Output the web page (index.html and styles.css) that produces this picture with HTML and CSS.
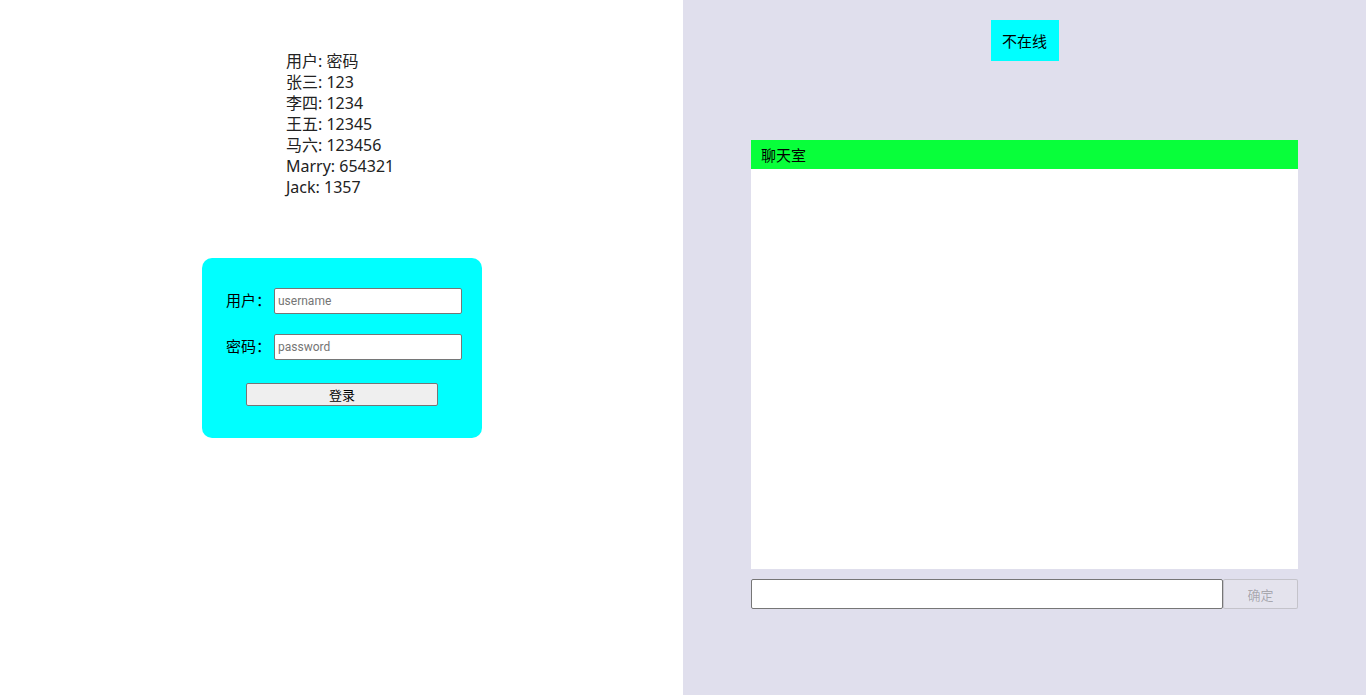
FILE: index.html
```html
<!DOCTYPE html>
<html>
<head>
<meta charset="utf-8">
<link rel="stylesheet" href="styles.css">
</head>
<body>
<div class="page">
  <div class="left">
    <div class="users">
      <div>用户: 密码</div>
      <div>张三: 123</div>
      <div>李四: 1234</div>
      <div>王五: 12345</div>
      <div>马六: 123456</div>
      <div>Marry: 654321</div>
      <div>Jack: 1357</div>
    </div>
    <div class="login">
      <div class="row"><span class="label">用户：</span><input class="field" placeholder="username"></div>
      <div class="row"><span class="label">密码：</span><input class="field" type="password" placeholder="password"></div>
      <button class="submit">登录</button>
    </div>
  </div>
  <div class="right">
    <div class="status">不在线</div>
    <div class="chat">
      <div class="chat-head">聊天室</div>
      <div class="chat-body"></div>
    </div>
    <div class="send">
      <input class="msg">
      <button class="ok" disabled>确定</button>
    </div>
  </div>
</div>
</body>
</html>
```
FILE: styles.css
```css
html, body { margin: 0; padding: 0; }
body { font-family: "Noto Sans", "Noto Sans CJK SC", sans-serif; }
.page { display: flex; width: 1366px; height: 695px; }
.left { width: 683px; background: #fff; }
.right { width: 683px; background: #e0dfed; display: flex; flex-direction: column; align-items: center; }
.users { margin: 51px 0 0 286px; font-size: 16px; line-height: 21px; color: #222; font-family: "Noto Sans", "Noto Sans CJK SC", sans-serif; }
.login { box-sizing: border-box; width: 280px; height: 180px; margin: 60px 0 0 202px; background: #00ffff; border-radius: 10px; padding-top: 30px; display: flex; flex-direction: column; align-items: center; }
.row { display: flex; align-items: center; margin-left: 24px; width: 256px; height: 26px; margin-bottom: 20px; }
.label { width: 48px; font-size: 15px; line-height: 20px; padding-bottom: 3px; font-family: "Noto Sans CJK SC", sans-serif; color: #000; }
.field { box-sizing: border-box; width: 188px; height: 26px; border: 1px solid #767676; border-radius: 2px; padding: 0 3px; font-family: Roboto, "Liberation Sans", sans-serif; font-size: 12px; margin: 0; }
.field::placeholder { color: #757575; }
.submit { box-sizing: border-box; width: 192px; height: 23px; margin-top: 3px; border: 1px solid #767676; border-radius: 2px; background: #efefef; font-size: 13px; font-family: "Noto Sans CJK SC", sans-serif; color: #000; padding: 0; }
.status { margin-top: 20px; width: 68px; height: 41px; background: #00ffff; display: flex; align-items: center; justify-content: center; font-size: 15px; font-family: "Noto Sans CJK SC", sans-serif; color: #000; }
.chat { margin-top: 79px; width: 547px; }
.chat-head { height: 29px; background: #08ff3a; font-size: 15px; line-height: 29px; padding-left: 10px; font-family: "Noto Sans CJK SC", sans-serif; color: #000; }
.chat-body { height: 400px; background: #fff; }
.send { margin-top: 10px; width: 547px; display: flex; }
.msg { box-sizing: border-box; width: 472px; height: 30px; margin: 0; border: 1px solid #767676; border-radius: 2px; background: #fff; }
.ok { box-sizing: border-box; width: 75px; height: 30px; margin: 0; border: 1px solid rgba(118,118,118,0.3); border-radius: 2px; background: rgba(239,239,239,0.3); color: rgba(16,16,16,0.3); font-size: 13px; font-family: "Noto Sans CJK SC", sans-serif; padding: 0; }
```
